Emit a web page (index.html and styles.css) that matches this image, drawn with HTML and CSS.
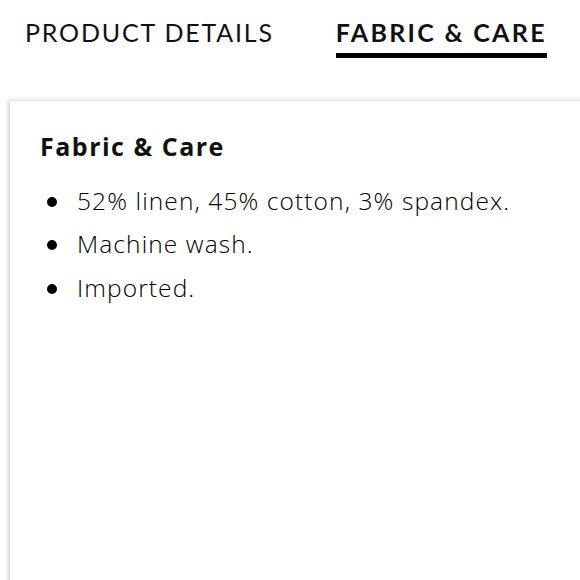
FILE: index.html
```html
<!DOCTYPE html>
<html>
<head>
<meta charset="utf-8">
<link rel="stylesheet" href="styles.css">
</head>
<body>
<nav class="tabs">
  <div class="tab">PRODUCT DETAILS</div>
  <div class="tab tab-active">FABRIC &amp; CARE</div>
</nav>
<section class="card">
  <h2 class="card-title">Fabric &amp; Care</h2>
  <ul class="care-list">
    <li>52% linen, 45% cotton, 3% spandex.</li>
    <li>Machine wash.</li>
    <li>Imported.</li>
  </ul>
</section>
</body>
</html>
```
FILE: styles.css
```css
html, body {
  margin: 0;
  padding: 0;
  background: #fff;
  overflow: hidden;
}
body {
  width: 580px;
  height: 580px;
  font-family: Lato, "Noto Sans", sans-serif;
  color: #111;
}
.tabs {
  display: flex;
  gap: 62px;
  padding: 17px 0 0 25px;
  height: 84px;
  box-sizing: border-box;
}
.tab {
  font-size: 25px;
  letter-spacing: 1.8px;
  line-height: 30px;
  height: 36px;
  font-weight: 400;
}
.tab-active {
  font-weight: 700;
  letter-spacing: 2.3px;
  border-bottom: 5px solid #000;
}
.card {
  margin: 17px -40px 0 10px;
  height: 600px;
  background: #fff;
  box-shadow: -2px -1px 4px rgba(0,0,0,0.18);
  padding: 30px 30px;
  box-sizing: border-box;
}
.card-title {
  margin: 0 0 17.5px 0;
  font-family: "Open Sans", sans-serif;
  font-size: 25px;
  font-weight: 700;
  letter-spacing: 1.5px;
  line-height: 30px;
}
.care-list {
  list-style: none;
  margin: 0;
  padding: 0;
  font-family: "Open Sans", sans-serif;
  font-size: 24.5px;
  font-weight: 350;
  color: #000;
  letter-spacing: 1.1px;
  line-height: 43.5px;
}
.care-list li {
  display: flex;
  align-items: center;
}
.care-list li::before {
  content: "";
  width: 10px;
  height: 10px;
  border-radius: 50%;
  background: #000;
  margin: 3px 20px 0 7px;
  flex: none;
}
```
